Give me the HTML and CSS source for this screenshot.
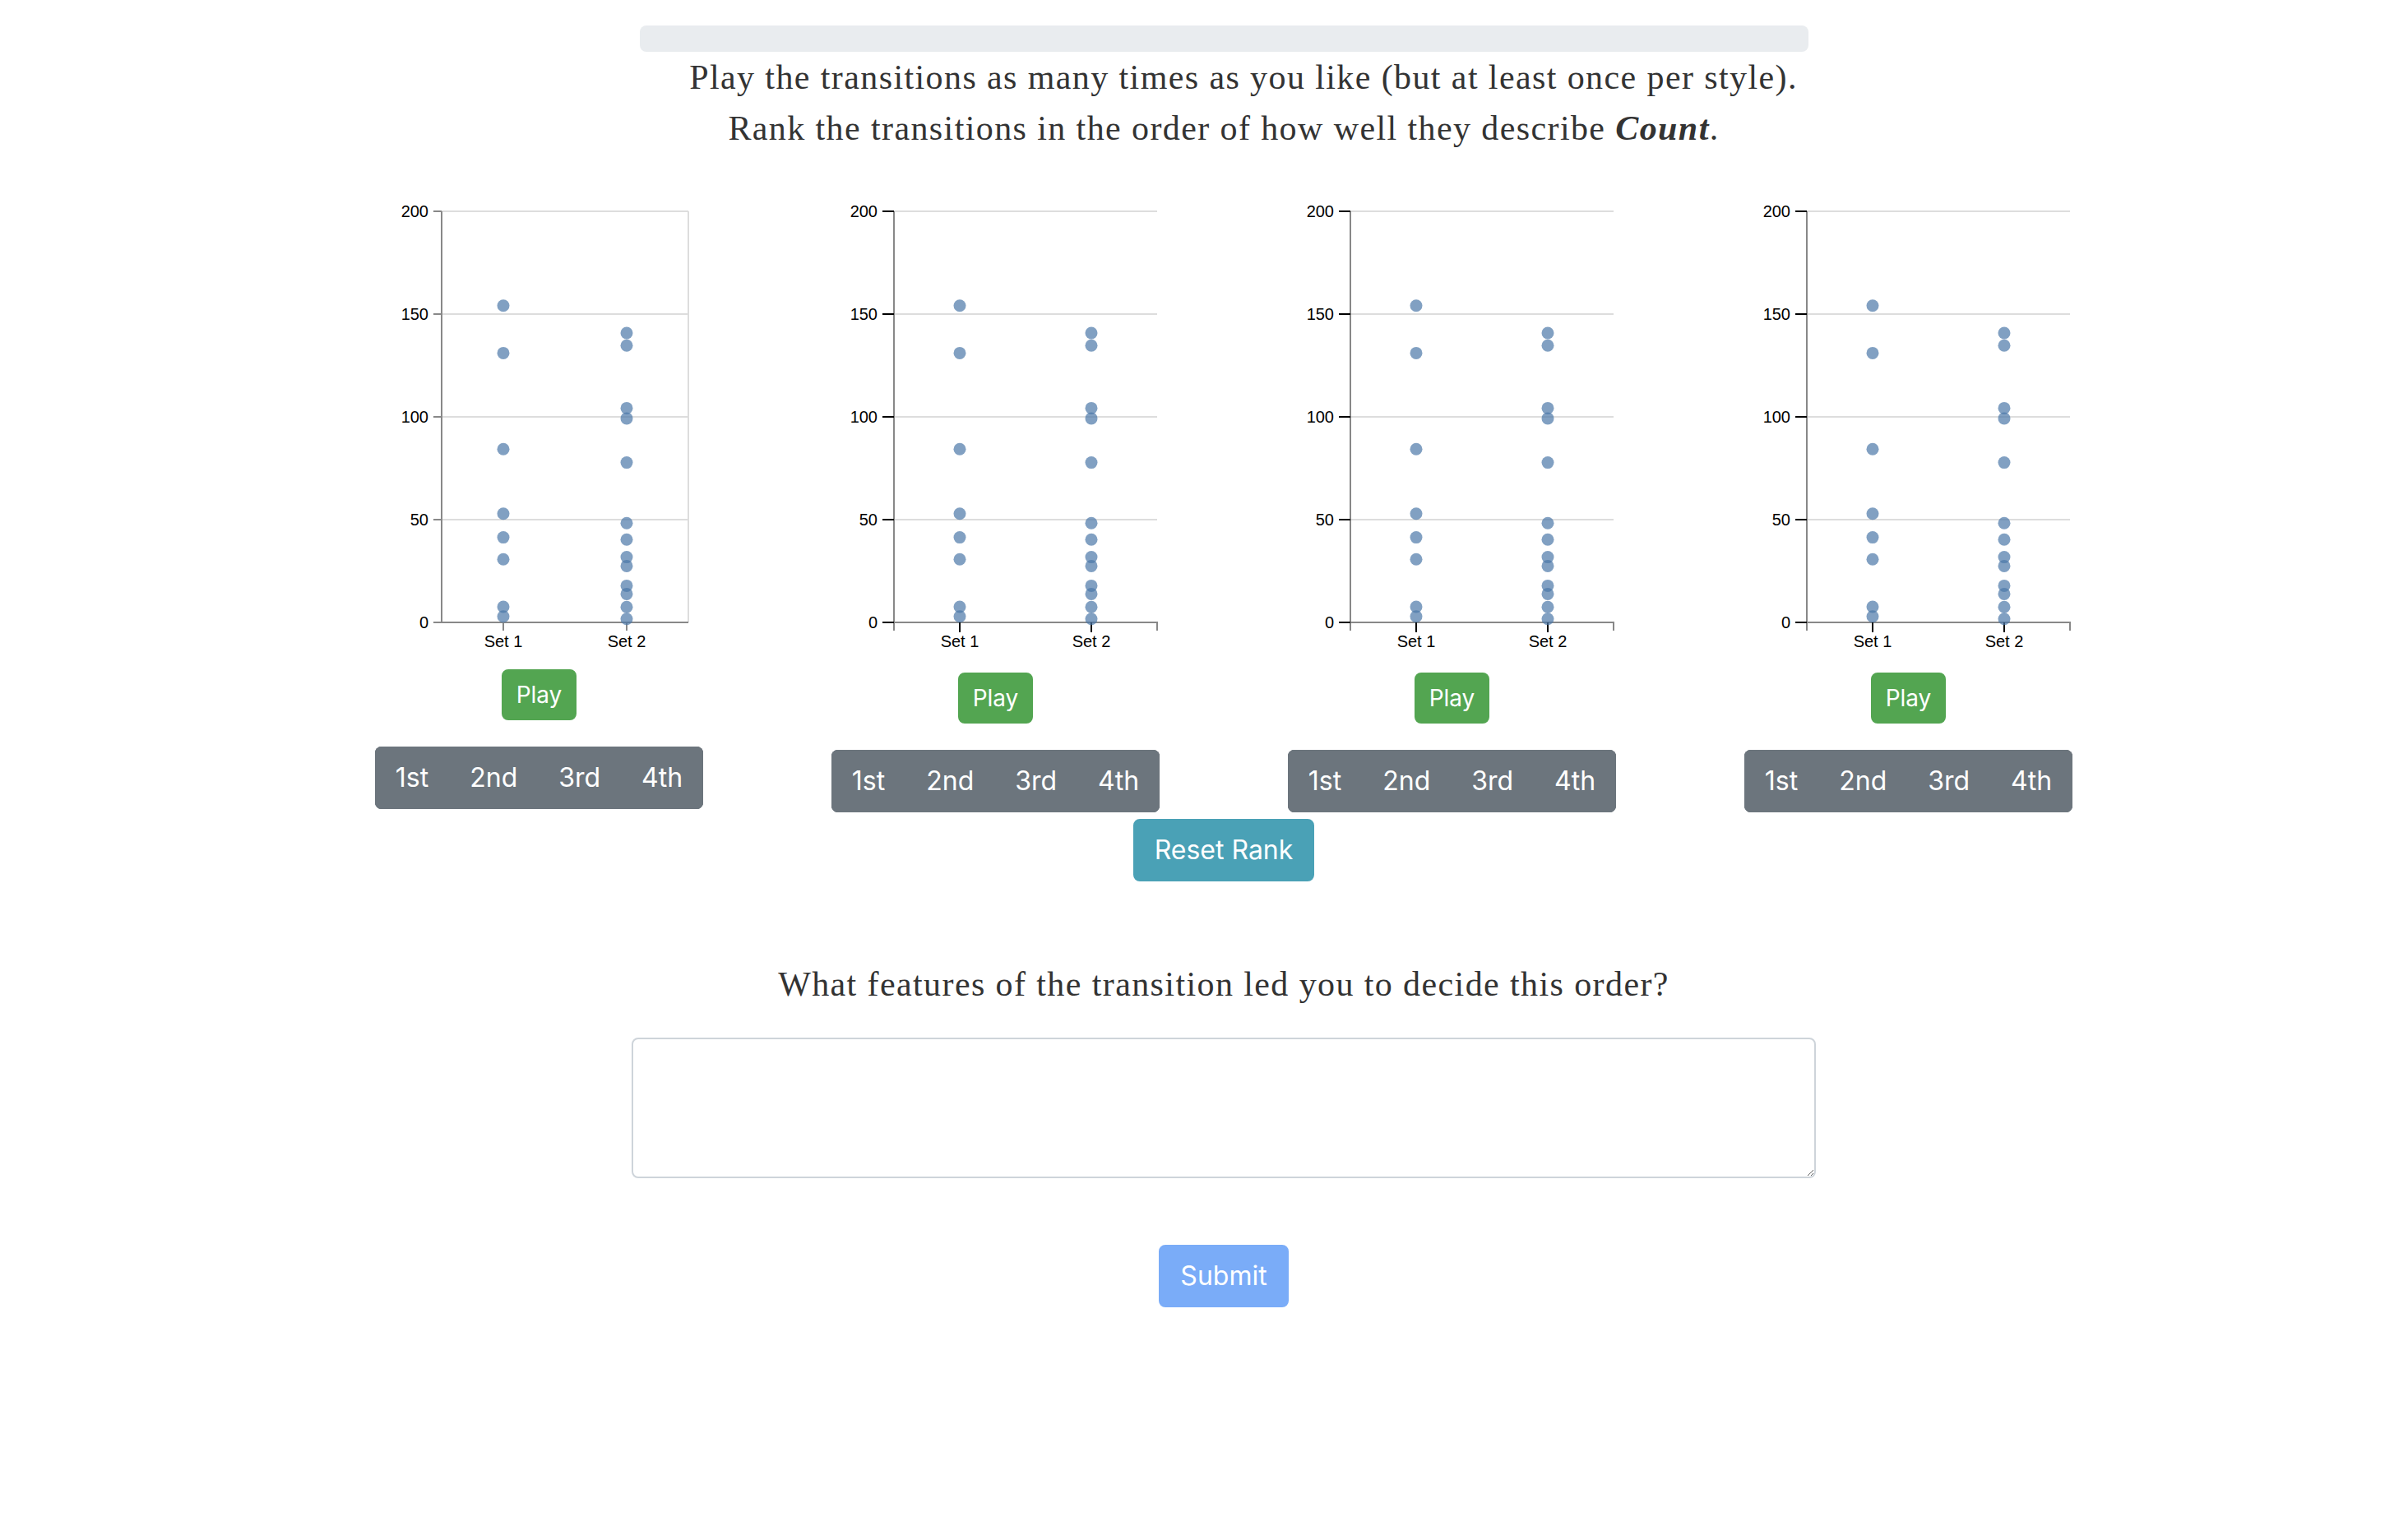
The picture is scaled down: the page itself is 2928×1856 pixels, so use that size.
FILE: index.html
```html
<!DOCTYPE html>
<html lang="en">
<head>
<meta charset="utf-8">
<title>Rank the transitions</title>
<link rel="stylesheet" href="styles.css">
</head>
<body>
<div class="page">
  <div class="progress"></div>
  <div class="instructions">
    <p class="line1">Play the transitions as many times as you like (but at least once per style).</p>
    <p>Rank the transitions in the order of how well they describe <b><i>Count</i></b>.</p>
  </div>

  <div class="charts">
    <div class="col">
      <svg class="chart" width="555" height="570" viewBox="0 0 555 570">
        <defs>
          <g id="s1">
            <circle cx="0" cy="145.7" r="7.5"/>
            <circle cx="0" cy="203.4" r="7.5"/>
            <circle cx="0" cy="320.3" r="7.5"/>
            <circle cx="0" cy="398.7" r="7.5"/>
            <circle cx="0" cy="427.6" r="7.5"/>
            <circle cx="0" cy="454.2" r="7.5"/>
            <circle cx="0" cy="512" r="7.5"/>
            <circle cx="0" cy="523.8" r="7.5"/>
          </g>
          <g id="s2">
            <circle cx="0" cy="179" r="7.5"/>
            <circle cx="0" cy="194.2" r="7.5"/>
            <circle cx="0" cy="270.4" r="7.5"/>
            <circle cx="0" cy="282.9" r="7.5"/>
            <circle cx="0" cy="336.6" r="7.5"/>
            <circle cx="0" cy="410.2" r="7.5"/>
            <circle cx="0" cy="430.2" r="7.5"/>
            <circle cx="0" cy="451.6" r="7.5"/>
            <circle cx="0" cy="462.4" r="7.5"/>
            <circle cx="0" cy="486.4" r="7.5"/>
            <circle cx="0" cy="496.4" r="7.5"/>
            <circle cx="0" cy="512.3" r="7.5"/>
            <circle cx="0" cy="526.7" r="7.5"/>
          </g>
        </defs>
        <path class="grid" d="M159,31H459M159,156H459M159,281H459M159,406H459M459,31V531"/>
        <path class="domain" d="M159,31V531H459"/>
        <path class="tick-gray" d="M149,31H159M149,156H159M149,281H159M149,406H159M149,531H159M234,531V541M384,531V541"/>
        <g class="ylab">
          <text x="143" y="38">200</text>
          <text x="143" y="163">150</text>
          <text x="143" y="288">100</text>
          <text x="143" y="413">50</text>
          <text x="143" y="538">0</text>
        </g>
        <g class="xlab">
          <text x="234" y="561">Set 1</text>
          <text x="384" y="561">Set 2</text>
        </g>
        <g class="dots">
          <use href="#s1" x="234"/>
          <use href="#s2" x="384"/>
        </g>
      </svg>
      <button class="btn btn-play" type="button">Play</button>
      <div class="rank-group">
        <button class="btn btn-rank" type="button">1st</button>
        <button class="btn btn-rank" type="button">2nd</button>
        <button class="btn btn-rank" type="button">3rd</button>
        <button class="btn btn-rank" type="button">4th</button>
      </div>
    </div>

    <div class="col">
      <svg class="chart" width="555" height="574" viewBox="0 0 555 574">
        <path class="grid" d="M154,31H474M154,156H474M154,281H474M154,406H474"/>
        <path class="domain" d="M154,31V531M154,541V531H474V541"/>
        <path class="tick" d="M140,31H154M140,156H154M140,281H154M140,406H154M140,531H154M234,531V543M394,531V543"/>
        <g class="ylab">
          <text x="134" y="38">200</text>
          <text x="134" y="163">150</text>
          <text x="134" y="288">100</text>
          <text x="134" y="413">50</text>
          <text x="134" y="538">0</text>
        </g>
        <g class="xlab">
          <text x="234" y="561">Set 1</text>
          <text x="394" y="561">Set 2</text>
        </g>
        <g class="dots">
          <use href="#s1" x="234"/>
          <use href="#s2" x="394"/>
        </g>
      </svg>
      <button class="btn btn-play" type="button">Play</button>
      <div class="rank-group">
        <button class="btn btn-rank" type="button">1st</button>
        <button class="btn btn-rank" type="button">2nd</button>
        <button class="btn btn-rank" type="button">3rd</button>
        <button class="btn btn-rank" type="button">4th</button>
      </div>
    </div>

    <div class="col">
      <svg class="chart" width="555" height="574" viewBox="0 0 555 574">
        <path class="grid" d="M154,31H474M154,156H474M154,281H474M154,406H474"/>
        <path class="domain" d="M154,31V531M154,541V531H474V541"/>
        <path class="tick" d="M140,31H154M140,156H154M140,281H154M140,406H154M140,531H154M234,531V543M394,531V543"/>
        <g class="ylab">
          <text x="134" y="38">200</text>
          <text x="134" y="163">150</text>
          <text x="134" y="288">100</text>
          <text x="134" y="413">50</text>
          <text x="134" y="538">0</text>
        </g>
        <g class="xlab">
          <text x="234" y="561">Set 1</text>
          <text x="394" y="561">Set 2</text>
        </g>
        <g class="dots">
          <use href="#s1" x="234"/>
          <use href="#s2" x="394"/>
        </g>
      </svg>
      <button class="btn btn-play" type="button">Play</button>
      <div class="rank-group">
        <button class="btn btn-rank" type="button">1st</button>
        <button class="btn btn-rank" type="button">2nd</button>
        <button class="btn btn-rank" type="button">3rd</button>
        <button class="btn btn-rank" type="button">4th</button>
      </div>
    </div>

    <div class="col">
      <svg class="chart" width="555" height="574" viewBox="0 0 555 574">
        <path class="grid" d="M154,31H474M154,156H474M154,281H474M154,406H474"/>
        <path class="domain" d="M154,31V531M154,541V531H474V541"/>
        <path class="tick" d="M140,31H154M140,156H154M140,281H154M140,406H154M140,531H154M234,531V543M394,531V543"/>
        <g class="ylab">
          <text x="134" y="38">200</text>
          <text x="134" y="163">150</text>
          <text x="134" y="288">100</text>
          <text x="134" y="413">50</text>
          <text x="134" y="538">0</text>
        </g>
        <g class="xlab">
          <text x="234" y="561">Set 1</text>
          <text x="394" y="561">Set 2</text>
        </g>
        <g class="dots">
          <use href="#s1" x="234"/>
          <use href="#s2" x="394"/>
        </g>
      </svg>
      <button class="btn btn-play" type="button">Play</button>
      <div class="rank-group">
        <button class="btn btn-rank" type="button">1st</button>
        <button class="btn btn-rank" type="button">2nd</button>
        <button class="btn btn-rank" type="button">3rd</button>
        <button class="btn btn-rank" type="button">4th</button>
      </div>
    </div>
  </div>

  <div class="reset-row">
    <button class="btn btn-reset" type="button">Reset Rank</button>
  </div>

  <p class="question">What features of the transition led you to decide this order?</p>
  <textarea class="answer"></textarea>

  <div class="submit-row">
    <button class="btn btn-submit" type="button" disabled>Submit</button>
  </div>
</div>
</body>
</html>
```

FILE: styles.css
```css
* {
  box-sizing: border-box;
}

body {
  margin: 0;
  background: #ffffff;
  color: #333333;
  font-family: "Liberation Serif", "Times New Roman", serif;
}

.page {
  width: 2220px;
  margin-left: 378px;
}

.progress {
  width: 1421px;
  height: 32px;
  margin: 31px auto 0;
  background: #e9ecef;
  border-radius: 8px;
}

.instructions {
  text-align: center;
  font-size: 42px;
  line-height: 62px;
  letter-spacing: 1.4px;
}

.instructions p {
  margin: 0;
}

.instructions .line1 {
  padding-left: 48px;
}

.charts {
  display: flex;
  margin-top: 39px;
}

.col {
  width: 555px;
  display: flex;
  flex-direction: column;
  align-items: center;
}

.chart {
  display: block;
  align-self: flex-start;
}

.chart .grid {
  fill: none;
  stroke: #dddddd;
  stroke-width: 2;
}

.chart .domain {
  fill: none;
  stroke: #888888;
  stroke-width: 2;
}

.chart .tick {
  fill: none;
  stroke: #000000;
  stroke-width: 2;
}

.chart .tick-gray {
  fill: none;
  stroke: #888888;
  stroke-width: 2;
}

.chart text {
  font-family: "Liberation Sans", Arial, sans-serif;
  font-size: 20px;
  fill: #000000;
}

.chart .ylab text {
  text-anchor: end;
}

.chart .xlab text {
  text-anchor: middle;
}

.chart .dots {
  fill: #4c78a8;
}

.chart circle {
  fill-opacity: 0.7;
}

.btn {
  font-family: Inter, "Noto Sans", sans-serif;
  font-weight: 400;
  color: #ffffff;
  font-size: 32px;
  line-height: 48px;
  padding: 12px 24px;
  border: 2px solid transparent;
  border-radius: 8px;
  margin: 0;
  cursor: pointer;
}

.btn-play {
  margin-top: 18px;
  background: #53a551;
  border-color: #53a551;
  font-size: 28px;
  line-height: 42px;
  padding: 8px 16px;
}

.rank-group {
  display: flex;
  margin-top: 32px;
  border-radius: 8px;
  overflow: hidden;
  background: #6c757d;
}

.btn-rank {
  background: #6c757d;
  border-color: #6c757d;
  border-radius: 0;
  padding: 12px 23px;
}

.reset-row {
  display: flex;
  justify-content: center;
  margin-top: 8px;
}

.btn-reset {
  background: #4aa1b6;
  border-color: #4aa1b6;
}

.question {
  margin: 94px 0 0;
  text-align: center;
  font-size: 42px;
  line-height: 62px;
  letter-spacing: 1.4px;
}

.answer {
  display: block;
  width: 1440px;
  height: 171px;
  margin: 34px auto 0;
  border: 2px solid #ced4da;
  border-radius: 8px;
  background: #ffffff;
  font-family: Inter, sans-serif;
  font-size: 32px;
}

.submit-row {
  display: flex;
  justify-content: center;
  margin-top: 81px;
}

.btn-submit {
  background: #7aacf8;
  border-color: #7aacf8;
  cursor: default;
}
```
